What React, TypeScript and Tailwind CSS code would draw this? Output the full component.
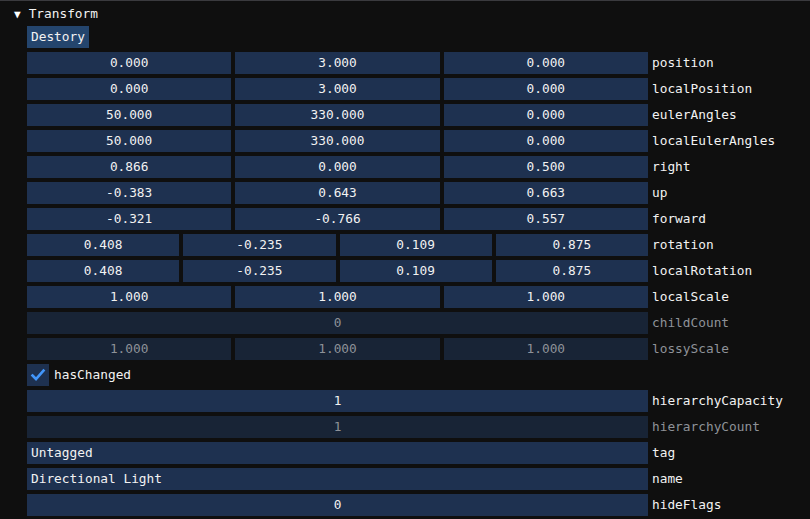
import React from "react";

// ImGui-style Transform inspector panel
const FONT = { fontFamily: '"DejaVu Sans Mono", "Liberation Mono", monospace' };

type Row =
  | { kind: "vec"; values: string[]; label: string; disabled?: boolean }
  | { kind: "text"; value: string; label: string; disabled?: boolean; left?: boolean }
  | { kind: "check"; label: string };

const rows: Row[] = [
  { kind: "vec", values: ["0.000", "3.000", "0.000"], label: "position" },
  { kind: "vec", values: ["0.000", "3.000", "0.000"], label: "localPosition" },
  { kind: "vec", values: ["50.000", "330.000", "0.000"], label: "eulerAngles" },
  { kind: "vec", values: ["50.000", "330.000", "0.000"], label: "localEulerAngles" },
  { kind: "vec", values: ["0.866", "0.000", "0.500"], label: "right" },
  { kind: "vec", values: ["-0.383", "0.643", "0.663"], label: "up" },
  { kind: "vec", values: ["-0.321", "-0.766", "0.557"], label: "forward" },
  { kind: "vec", values: ["0.408", "-0.235", "0.109", "0.875"], label: "rotation" },
  { kind: "vec", values: ["0.408", "-0.235", "0.109", "0.875"], label: "localRotation" },
  { kind: "vec", values: ["1.000", "1.000", "1.000"], label: "localScale" },
  { kind: "text", value: "0", label: "childCount", disabled: true },
  { kind: "vec", values: ["1.000", "1.000", "1.000"], label: "lossyScale", disabled: true },
  { kind: "check", label: "hasChanged" },
  { kind: "text", value: "1", label: "hierarchyCapacity" },
  { kind: "text", value: "1", label: "hierarchyCount", disabled: true },
  { kind: "text", value: "Untagged", label: "tag", left: true },
  { kind: "text", value: "Directional Light", label: "name", left: true },
  { kind: "text", value: "0", label: "hideFlags" },
];

function Frame({ value, disabled, left }: { value: string; disabled?: boolean; left?: boolean }) {
  return (
    <div
      className={
        "flex h-[22px] flex-1 items-center " +
        (left ? "justify-start px-[4px] " : "justify-center ") +
        (disabled ? "bg-[#182436] text-[#8e9298]" : "bg-[#1e3150] text-[#f2f2f2]")
      }
    >
      {value}
    </div>
  );
}

export default function App() {
  return (
    <div className="h-[519px] w-[810px] overflow-hidden bg-[#0f0f0f] text-[12.8px]" style={FONT}>
      <div className="h-px bg-[#3a3a3e]" />
      <div className="flex h-[22px] mt-[2px] items-center">
        <span className="ml-[14px] text-[11px] text-white leading-none">▼</span>
        <span className="ml-[8px] text-[#f2f2f2]">Transform</span>
      </div>
      <div className="mt-px flex flex-col gap-[4px] pl-[27px]">
        <div className="flex h-[22px] w-fit items-center bg-[#24456d] px-[4px] text-[#f2f2f2]">Destory</div>
        {rows.map((r, i) => {
          if (r.kind === "check") {
            return (
              <div key={i} className="flex h-[22px] items-center gap-[5px]">
                <div className="flex h-[22px] w-[22px] items-center justify-center bg-[#1e3150]">
                  <svg width="16" height="16" viewBox="0 0 16 16">
                    <polyline
                      points="2.5,8.5 6,12 13.5,3.5"
                      fill="none"
                      stroke="#4296fa"
                      strokeWidth="2.6"
                      strokeLinecap="square"
                    />
                  </svg>
                </div>
                <span className="text-[#f2f2f2]">{r.label}</span>
              </div>
            );
          }
          return (
            <div key={i} className="flex h-[22px] items-center">
              <div className="flex w-[621px] gap-[4px]">
                {r.kind === "vec" ? (
                  r.values.map((v, j) => <Frame key={j} value={v} disabled={r.disabled} />)
                ) : (
                  <Frame value={r.value} disabled={r.disabled} left={r.left} />
                )}
              </div>
              <span className={"ml-[4px] " + (r.disabled ? "text-[#8e9298]" : "text-[#f2f2f2]")}>
                {r.label}
              </span>
            </div>
          );
        })}
      </div>
    </div>
  );
}
